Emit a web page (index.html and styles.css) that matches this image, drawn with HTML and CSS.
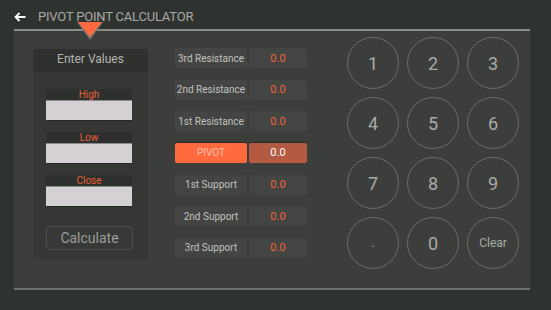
FILE: index.html
```html
<!DOCTYPE html>
<html lang="en">
<head>
    <meta charset="UTF-8">
    <meta name="viewport" content="width=device-width, initial-scale=1.0">
    <title>Pivot Point Calculator</title>
    <link rel="stylesheet" href="styles.css">
</head>
<body>

    <header class="app-bar">
        <svg class="back" width="12" height="10" viewBox="0 0 12 10">
            <path d="M11.5 5H1.5M5.5 1L1.5 5L5.5 9" fill="none" stroke="#fff" stroke-width="1.8"/>
        </svg>
        <h1>PIVOT POINT CALCULATOR</h1>
    </header>

    <main class="panel">
        <span class="marker"></span>

        <section class="input-card">
            <h2>Enter Values</h2>
            <div class="fields">
                <label class="field">
                    <span>High</span>
                    <input type="text">
                </label>
                <label class="field">
                    <span>Low</span>
                    <input type="text">
                </label>
                <label class="field">
                    <span>Close</span>
                    <input type="text">
                </label>
                <button class="calc-btn">Calculate</button>
            </div>
        </section>

        <section class="results">
            <div class="row"><span class="name">3rd Resistance</span><span class="val">0.0</span></div>
            <div class="row"><span class="name">2nd Resistance</span><span class="val">0.0</span></div>
            <div class="row"><span class="name">1st Resistance</span><span class="val">0.0</span></div>
            <div class="row pivot"><span class="name">PIVOT</span><span class="val">0.0</span></div>
            <div class="row"><span class="name">1st Support</span><span class="val">0.0</span></div>
            <div class="row"><span class="name">2nd Support</span><span class="val">0.0</span></div>
            <div class="row"><span class="name">3rd Support</span><span class="val">0.0</span></div>
        </section>

        <section class="keypad">
            <button>1</button>
            <button>2</button>
            <button>3</button>
            <button>4</button>
            <button>5</button>
            <button>6</button>
            <button>7</button>
            <button>8</button>
            <button>9</button>
            <button class="dot">.</button>
            <button>0</button>
            <button class="clear">Clear</button>
        </section>
    </main>

</body>
</html>
```

FILE: styles.css
```css
body {
    margin: 0;
    width: 551px;
    height: 310px;
    overflow: hidden;
    background-color: #2f332f;
    font-family: Roboto, "Noto Sans", sans-serif;
}

.app-bar {
    display: flex;
    align-items: center;
    height: 29px;
    padding-left: 14px;
    box-sizing: border-box;
}

.app-bar .back {
    margin-top: 4px;
}

.app-bar h1 {
    margin: 4px 0 0 12px;
    font-size: 13px;
    font-weight: 400;
    letter-spacing: -0.2px;
    color: #a8a8a6;
}

.panel {
    position: relative;
    display: flex;
    align-items: flex-start;
    width: 516px;
    height: 261px;
    margin-left: 14px;
    box-sizing: border-box;
    background-color: #3c3e3b;
    border-top: 2px solid #8a8c88;
    border-bottom: 2px solid #6f716d;
}

.marker {
    position: absolute;
    left: 63px;
    top: -9px;
    width: 0;
    height: 0;
    border-left: 13px solid transparent;
    border-right: 13px solid transparent;
    border-top: 18px solid #737571;
}

.marker::before {
    content: "";
    position: absolute;
    left: -12px;
    top: -18px;
    border-left: 12px solid transparent;
    border-right: 12px solid transparent;
    border-top: 15px solid #ff6b3e;
}

/* input card */
.input-card {
    width: 115px;
    height: 210px;
    margin: 18px 0 0 19px;
    border-radius: 3px;
    background-color: #343733;
    overflow: hidden;
}

.input-card h2 {
    margin: 0;
    height: 23px;
    line-height: 21px;
    text-align: center;
    font-size: 12px;
    font-weight: 400;
    color: #b4b4b2;
    background-color: #2e312e;
}

.fields {
    display: flex;
    flex-direction: column;
    gap: 11px;
    padding: 17px 0 0 13px;
}

.field {
    display: flex;
    flex-direction: column;
    width: 86px;
}

.field span {
    height: 11px;
    line-height: 12px;
    text-align: center;
    font-size: 10px;
    color: #e8603a;
    background-color: #2d302d;
}

.field input {
    height: 21px;
    padding: 0;
    box-sizing: border-box;
    border: none;
    border-top: 1px solid #8c8a8c;
    border-bottom: 1px solid #242624;
    background-color: #d4d0d4;
}

.calc-btn {
    width: 87px;
    height: 24px;
    margin-top: 8px;
    padding: 0;
    border: 1px solid #4b4e4a;
    border-radius: 4px;
    background-color: #363935;
    font-family: inherit;
    font-size: 14px;
    color: #9c9d9a;
}

/* results */
.results {
    display: flex;
    flex-direction: column;
    gap: 11.67px;
    margin: 17px 0 0 27px;
}

.row {
    display: flex;
    gap: 2px;
    height: 20px;
}

.row span {
    display: flex;
    align-items: center;
    justify-content: center;
    border-radius: 2px;
    background-color: #434542;
}

.row .name {
    width: 72px;
    font-size: 10px;
    color: #c2c2c0;
}

.row .val {
    width: 58px;
    font-size: 11px;
    color: #f0643c;
}

.row.pivot .name {
    background-color: #ff6b3e;
    color: #ffc1aa;
    box-shadow: 0 -1px 0 #2a2d2a;
}

.row.pivot .val {
    background-color: #b45a42;
    color: #ffffff;
    box-shadow: 0 -1px 0 #2a2d2a;
}

/* keypad */
.keypad {
    display: grid;
    grid-template-columns: repeat(3, 52px);
    grid-auto-rows: 52px;
    gap: 8px;
    margin: 6px 0 0 40px;
}

.keypad button {
    padding: 0;
    border: 1px solid #6b6d69;
    border-radius: 50%;
    background: none;
    font-family: inherit;
    font-size: 18px;
    color: #a9aaa7;
}

.keypad .dot {
    font-size: 12px;
}

.keypad .clear {
    font-size: 12px;
}
```
